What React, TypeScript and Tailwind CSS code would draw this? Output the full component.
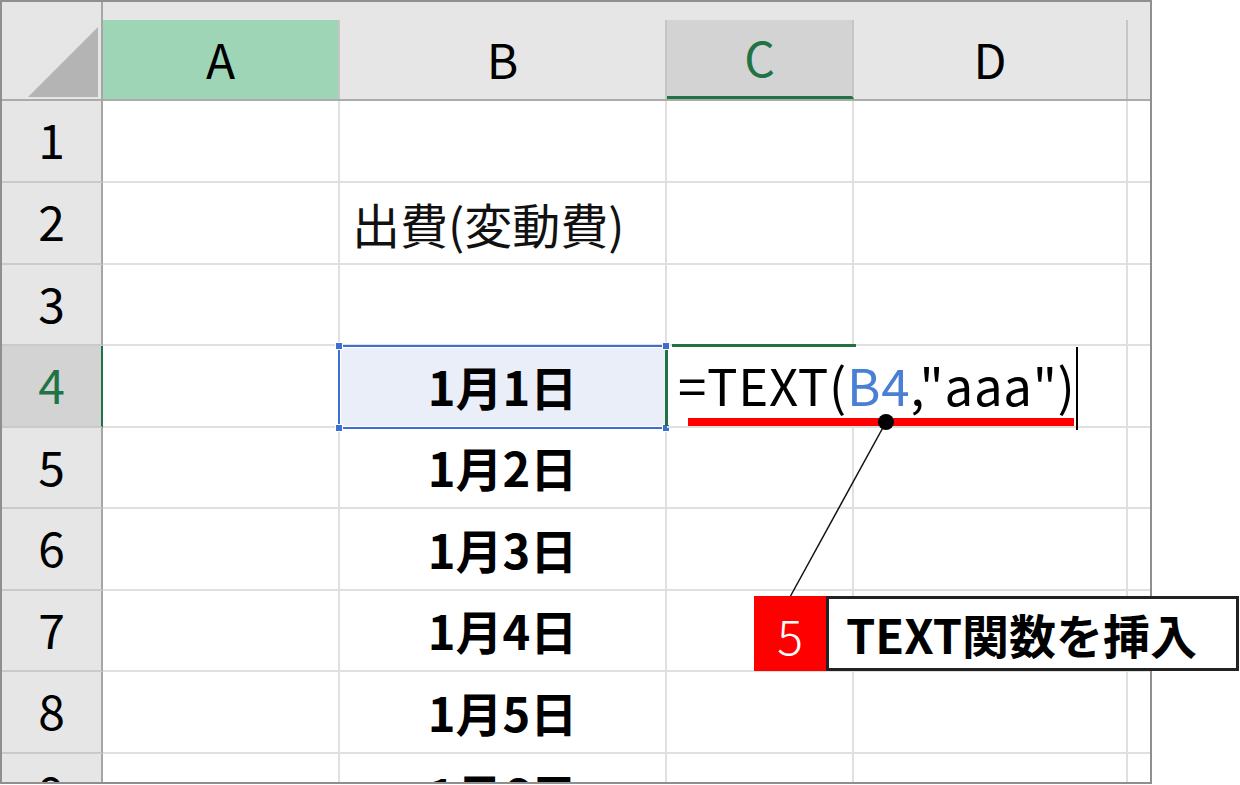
import React from "react";

const font = "font-['Noto_Sans_CJK_JP',sans-serif]";

const columns = ["A", "B", "C", "D"];
const rows = [1, 2, 3, 4, 5, 6, 7, 8, 9];

const dates: Record<number, string> = {
  4: "1月1日",
  5: "1月2日",
  6: "1月3日",
  7: "1月4日",
  8: "1月5日",
  9: "1月6日",
};

const HeaderCell = ({ label }: { label: string }) => {
  let box = "bg-[#e6e6e6] text-black";
  if (label === "A") box = "bg-[#9fd5b7] text-black";
  if (label === "C") box = "bg-[#d3d3d3] text-[#217346] border-b-[3px] border-b-[#217346]";
  return (
    <div className="bg-[#e6e6e6] pt-[18px] border-b-2 border-[#ababab]">
      <div
        className={`h-full flex items-center justify-center pb-[4px] border-r-2 border-r-[#c6c6c6] text-[48px] leading-none ${box}`}
      >
        {label}
      </div>
    </div>
  );
};

const RowHeader = ({ n }: { n: number }) => {
  const active = n === 4;
  return (
    <div
      className={`flex items-center justify-center pb-[6px] border-b-2 border-b-[#cacaca] border-r-2 text-[48px] leading-none ${
        active
          ? "bg-[#d3d3d3] border-r-[#217346] text-[#217346]"
          : "bg-[#e6e6e6] border-r-[#a6a6a6] text-black"
      }`}
    >
      {n}
    </div>
  );
};

export default function App() {
  return (
    <div className={`relative w-[1240px] h-[785px] bg-white overflow-hidden ${font}`}>
      <div className="w-[1152px] h-[784px] border-2 border-[#8f8f8f] overflow-hidden bg-white">
        <div className="grid grid-cols-[101px_237px_327px_187px_274px_22px] grid-rows-[99px_82px_82px_81px_82px_81px_82px_81px_82px_82px]">
          {/* corner */}
          <div className="bg-[#e6e6e6] border-r-2 border-r-[#a6a6a6] border-b-2 border-b-[#ababab] flex items-end justify-end pr-[3px] pb-[2px]">
            <svg width="70" height="70" viewBox="0 0 70 70">
              <polygon points="0,70 70,70 70,0" fill="#b4b4b4" />
            </svg>
          </div>
          {columns.map((c) => (
            <HeaderCell key={c} label={c} />
          ))}
          <div className="bg-[#e6e6e6] pt-[18px] border-b-2 border-[#ababab]" />

          {rows.map((r) => (
            <React.Fragment key={r}>
              <RowHeader n={r} />
              <div className="border-r-2 border-b-2 border-[#e0e0e0]" />
              <div
                className={`flex items-center border-r-2 border-b-2 border-[#e0e0e0] text-black ${
                  r === 4 ? "bg-[#e9eef8]" : ""
                }`}
              >
                {r === 2 && (
                  <span className="pl-[12px] text-[48px] font-normal text-[#111] whitespace-nowrap">
                    出費(変動費)
                  </span>
                )}
                {dates[r] && (
                  <span className="w-full text-center text-[47px] font-bold">{dates[r]}</span>
                )}
              </div>
              <div
                className={`flex items-center border-b-2 border-[#e0e0e0] ${
                  r === 4 ? "relative z-10" : "border-r-2"
                }`}
              >
                {r === 4 && (
                  <span className="pl-[11px] pb-[4px] whitespace-nowrap text-[51px] font-normal text-black tracking-[0.7px]">
                    =TEXT(<span className="text-[#4a7fd6]">B4</span>,"aaa")
                  </span>
                )}
              </div>
              <div className="border-r-2 border-b-2 border-[#e0e0e0]" />
              <div className="border-b-2 border-[#e0e0e0]" />
            </React.Fragment>
          ))}
        </div>
      </div>

      {/* selection of B4 */}
      <div className="absolute left-[338px] top-[345px] w-[330px] h-[84px] border-2 border-[#3c6fd0] shadow-[inset_0_0_0_1px_white] pointer-events-none" />
      <div className="absolute left-[335px] top-[342px] w-[8px] h-[8px] bg-[#3c6fd0] border border-white" />
      <div className="absolute left-[335px] top-[424px] w-[8px] h-[8px] bg-[#3c6fd0] border border-white" />
      <div className="absolute left-[662px] top-[342px] w-[8px] h-[8px] bg-[#3c6fd0] border border-white" />
      <div className="absolute left-[662px] top-[424px] w-[8px] h-[8px] bg-[#3c6fd0] border border-white" />

      {/* C4 edit marks */}
      <div className="absolute left-[672px] top-[344px] w-[184px] h-[3px] bg-[#217346]" />
      <div className="absolute left-[665px] top-[350px] w-[3px] h-[76px] bg-[#217346]" />

      {/* text cursor */}
      <div className="absolute left-[1076px] top-[347px] w-[2px] h-[83px] bg-black" />

      {/* red underline with leader line */}
      <div className="absolute z-20 left-[688px] top-[418px] w-[386px] h-[8px] bg-[#ff0000]" />
      <svg className="absolute z-20 left-0 top-0 pointer-events-none" width="1240" height="785">
        <line x1="886" y1="422" x2="790" y2="597" stroke="#111" strokeWidth="1.5" />
        <circle cx="886" cy="422" r="8" fill="#000" />
      </svg>

      {/* callout */}
      <div className="absolute z-30 left-[754px] top-[596px] h-[75px] flex">
        <div className="w-[72px] h-full bg-[#ff0000] flex items-center justify-center text-white text-[48px] font-light leading-none">
          5
        </div>
        <div className="w-[413px] h-full bg-white border-[3px] border-[#222] flex items-center pl-[17px] text-[47px] font-bold text-black leading-none whitespace-nowrap">
          TEXT関数を挿入
        </div>
      </div>
    </div>
  );
}
